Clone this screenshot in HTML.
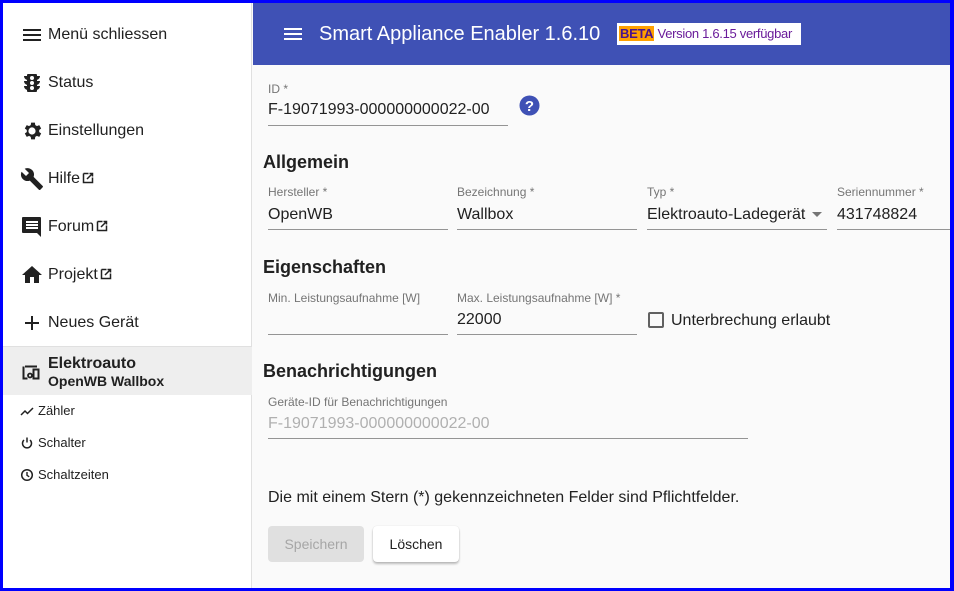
<!DOCTYPE html>
<html><head><meta charset="utf-8"><style>
*{box-sizing:border-box;margin:0;padding:0}
body{width:954px;height:591px;overflow:hidden;font-family:"Liberation Sans",Arial,sans-serif;background:#0000ff;position:relative;color:#212121}
.frame{position:absolute;left:3px;top:3px;width:947px;height:585px;background:#fafafa;overflow:hidden}
.side{position:absolute;left:0;top:0;width:249px;height:585px;background:#fff;border-right:1px solid #e0e0e0}
.it{position:absolute;left:0;height:24px;font-size:16px;line-height:24px}
.it > svg{position:absolute;left:17px;top:1px}
.it span{position:absolute;left:45px;top:1px;white-space:nowrap}
.ext{display:inline-block;vertical-align:-1px;margin-left:2px}
.sub{position:absolute;left:0;font-size:13px;line-height:16px}
.sub svg{position:absolute;left:17px;top:1px}
.sub span{position:absolute;left:35px;white-space:nowrap}
.hdr{position:absolute;left:250px;top:0;width:697px;height:62px;background:#3f51b5;color:#fff}
.abs{position:absolute;white-space:nowrap}
.lbl{font-size:12px;color:#757575}
.val{font-size:16px;color:#212121}
.ul{position:absolute;height:1px;background:#949494}
h3{position:absolute;font-size:18px;font-weight:bold;white-space:nowrap}
</style></head><body>
<div class="frame">
<div class="side">
 <div class="it" style="top:19px"><svg width="24" height="24" viewBox="0 0 24 24"><path d="M3 6h18v2H3zM3 11h18v2H3zM3 16h18v2H3z" fill="#212121"/></svg><span>Menü schliessen</span></div>
 <div class="it" style="top:67px"><svg width="24" height="24" viewBox="0 0 24 24"><path d="M20 10h-3V8.86c1.72-.45 3-2 3-3.860h-3V4c0-.55-.45-1-1-1H8c-.55 0-1 .45-1 1v1H4c0 1.86 1.28 3.41 3 3.86V10H4c0 1.86 1.28 3.41 3 3.86V15H4c0 1.86 1.28 3.41 3 3.86V20c0 .55.45 1 1 1h8c.55 0 1-.45 1-1v-1.14c1.72-.45 3-2 3-3.86h-3v-1.14c1.72-.45 3-2 3-3.86zm-8 9a2 2 0 110-4 2 2 0 010 4zm0-5a2 2 0 110-4 2 2 0 010 4zm0-5a2 2 0 110-4 2 2 0 010 4z" fill="#212121"/></svg><span>Status</span></div>
 <div class="it" style="top:115px"><svg width="24" height="24" viewBox="0 0 24 24"><path d="M19.14 12.94a7 7 0 000-1.88l2.03-1.58-1.92-3.32-2.39.96a7 7 0 00-1.620-.94L14.9 3.6h-3.8l-.36 2.58c-.58.24-1.12.55-1.62.94l-2.39-.96-1.92 3.32 2.03 1.58a7 7 0 000 1.88l-2.03 1.58 1.92 3.32 2.39-.96c.5.39 1.04.7 1.62.94l.36 2.58h3.8l.36-2.58c.58-.24 1.12-.55 1.62-.94l2.39.96 1.92-3.32zM12 15.6a3.6 3.6 0 110-7.2 3.6 3.6 0 010 7.2z" fill="#212121"/></svg><span>Einstellungen</span></div>
 <div class="it" style="top:163px"><svg width="24" height="24" viewBox="0 0 24 24"><path d="M22.7 19l-9.1-9.1c.9-2.3.4-5-1.5-6.9-2-2-5-2.4-7.4-1.3L9 6 6 9 1.6 4.7C.4 7.1.9 10.1 2.9 12.1c1.9 1.9 4.6 2.4 6.9 1.5l9.1 9.1c.4.4 1 .4 1.4 0l2.3-2.3c.5-.4.5-1.1.1-1.4z" fill="#212121"/></svg><span>Hilfe<svg class="ext" width="12" height="12" viewBox="0 0 12 12"><path d="M1.5 1.5h5M1.5 1.5v9h9v-5M5 7l5.5-5.5M7.5 1.5h3v3" stroke="#212121" stroke-width="1.5" fill="none"/></svg></span></div>
 <div class="it" style="top:211px"><svg width="24" height="24" viewBox="0 0 24 24"><path d="M21 2H3c-.55 0-1 .45-1 1v14c0 .55.45 1 1 1h14l4 4V3c0-.55-.45-1-1-1zM18 14H6v-2h12zm0-3H6V9h12zm0-3H6V6h12z" fill="#212121"/></svg><span>Forum<svg class="ext" width="12" height="12" viewBox="0 0 12 12"><path d="M1.5 1.5h5M1.5 1.5v9h9v-5M5 7l5.5-5.5M7.5 1.5h3v3" stroke="#212121" stroke-width="1.5" fill="none"/></svg></span></div>
 <div class="it" style="top:259px"><svg width="24" height="24" viewBox="0 0 24 24"><path d="M10 20v-6h4v6h5v-8h3L12 3 2 12h3v8z" fill="#212121"/></svg><span>Projekt<svg class="ext" width="12" height="12" viewBox="0 0 12 12"><path d="M1.5 1.5h5M1.5 1.5v9h9v-5M5 7l5.5-5.5M7.5 1.5h3v3" stroke="#212121" stroke-width="1.5" fill="none"/></svg></span></div>
 <div class="it" style="top:307px"><svg width="24" height="24" viewBox="0 0 24 24"><path d="M19 13h-6v6h-2v-6H5v-2h6V5h2v6h6z" fill="#212121"/></svg><span>Neues Gerät</span></div>
 <div style="position:absolute;left:0;top:343px;width:249px;height:1px;background:#e0e0e0"></div>
 <div style="position:absolute;left:0;top:344px;width:249px;height:48px;background:#eeeeee">
  <svg style="position:absolute;left:17px;top:13px" width="24" height="24" viewBox="0 0 24 24"><path d="M3.5 6.5v12h4M5 6.5h12M13.5 9.5h5v9h-5z" stroke="#212121" stroke-width="2" fill="none"/><circle cx="10" cy="15.5" r="2" stroke="#212121" stroke-width="1.8" fill="none"/></svg>
  <div class="abs" style="left:45px;top:8px;font-size:16px;font-weight:bold">Elektroauto</div>
  <div class="abs" style="left:45px;top:26px;font-size:14px;font-weight:bold">OpenWB Wallbox</div>
 </div>
 <div class="sub" style="top:400px"><svg width="14" height="14" viewBox="0 0 14 14"><path d="M1 11l4-4 2.5 2.5L13 4" stroke="#212121" stroke-width="1.5" fill="none"/></svg><span>Zähler</span></div>
 <div class="sub" style="top:432px"><svg width="14" height="14" viewBox="0 0 14 14"><path d="M4 4a4.5 4.5 0 106 0M7 1.5v5" stroke="#212121" stroke-width="1.5" fill="none"/></svg><span>Schalter</span></div>
 <div class="sub" style="top:464px"><svg width="14" height="14" viewBox="0 0 14 14"><circle cx="7" cy="7" r="5.3" stroke="#212121" stroke-width="1.5" fill="none"/><path d="M7 4v3.3l2.2 1.5" stroke="#212121" stroke-width="1.4" fill="none"/></svg><span>Schaltzeiten</span></div>
</div>
<div class="hdr">
 <svg style="position:absolute;left:28px;top:19px" width="24" height="24" viewBox="0 0 24 24"><path d="M3 6h18v2H3zM3 11h18v2H3zM3 16h18v2H3z" fill="#fff"/></svg>
 <div class="abs" style="left:66px;top:20px;font-size:20px">Smart Appliance Enabler 1.6.10</div>
 <div class="abs" style="left:364px;top:20px;height:22px;width:184px;background:#fff;padding:3px 2px;font-size:13px;line-height:16px;color:#6a1b9a;letter-spacing:-0.3px;overflow:hidden"><span style="background:#ffa000;color:#4a148c;font-weight:bold;padding:0 1px">BETA</span> Version 1.6.15 verfügbar</div>
</div>
<div class="abs lbl" style="left:265px;top:79px">ID *</div>
<div class="abs val" style="left:265px;top:98px">F-19071993-000000000022-00</div>
<div class="ul" style="left:265px;top:122px;width:240px"></div>
<svg style="position:absolute;left:516px;top:92px" width="21" height="21" viewBox="0 0 21 21"><circle cx="10.5" cy="10.5" r="10" fill="#3f51b5"/><text x="10.5" y="16" text-anchor="middle" font-family="Liberation Sans" font-weight="bold" font-size="15" fill="#fff">?</text></svg>
<h3 style="left:260px;top:149px">Allgemein</h3>
<div class="abs lbl" style="left:265px;top:182px">Hersteller *</div>
<div class="abs val" style="left:265px;top:203px">OpenWB</div>
<div class="ul" style="left:265px;top:226px;width:180px"></div>
<div class="abs lbl" style="left:454px;top:182px">Bezeichnung *</div>
<div class="abs val" style="left:454px;top:203px">Wallbox</div>
<div class="ul" style="left:454px;top:226px;width:180px"></div>
<div class="abs lbl" style="left:644px;top:182px">Typ *</div>
<div class="abs val" style="left:644px;top:203px">Elektroauto-Ladegerät</div>
<div class="abs" style="left:809px;top:209px;width:0;height:0;border-left:5px solid transparent;border-right:5px solid transparent;border-top:5px solid #757575"></div>
<div class="ul" style="left:644px;top:226px;width:180px"></div>
<div class="abs lbl" style="left:834px;top:182px">Seriennummer *</div>
<div class="abs val" style="left:834px;top:203px">431748824</div>
<div class="ul" style="left:834px;top:226px;width:120px"></div>
<h3 style="left:260px;top:254px">Eigenschaften</h3>
<div class="abs lbl" style="left:265px;top:288px">Min. Leistungsaufnahme [W]</div>
<div class="ul" style="left:265px;top:331px;width:180px"></div>
<div class="abs lbl" style="left:454px;top:288px">Max. Leistungsaufnahme [W] *</div>
<div class="abs val" style="left:454px;top:308px">22000</div>
<div class="ul" style="left:454px;top:331px;width:180px"></div>
<div class="abs" style="left:645px;top:309px;width:16px;height:16px;border:2px solid #616161;border-radius:2px"></div>
<div class="abs val" style="left:668px;top:309px">Unterbrechung erlaubt</div>
<h3 style="left:260px;top:358px">Benachrichtigungen</h3>
<div class="abs lbl" style="left:265px;top:392px">Geräte-ID für Benachrichtigungen</div>
<div class="abs val" style="left:265px;top:412px;color:#b0b0b0">F-19071993-000000000022-00</div>
<div class="ul" style="left:265px;top:435px;width:480px"></div>
<div class="abs val" style="left:265px;top:486px">Die mit einem Stern (*) gekennzeichneten Felder sind Pflichtfelder.</div>
<div class="abs" style="left:265px;top:523px;width:96px;height:36px;background:#e0e0e0;border-radius:4px;color:#a6a6a6;font-size:14px;line-height:36px;text-align:center">Speichern</div>
<div class="abs" style="left:370px;top:523px;width:86px;height:36px;background:#fff;border-radius:4px;box-shadow:0 2px 2px rgba(0,0,0,.25),0 0 1px rgba(0,0,0,.15);font-size:14px;line-height:36px;text-align:center">Löschen</div>
</div>
</body></html>
